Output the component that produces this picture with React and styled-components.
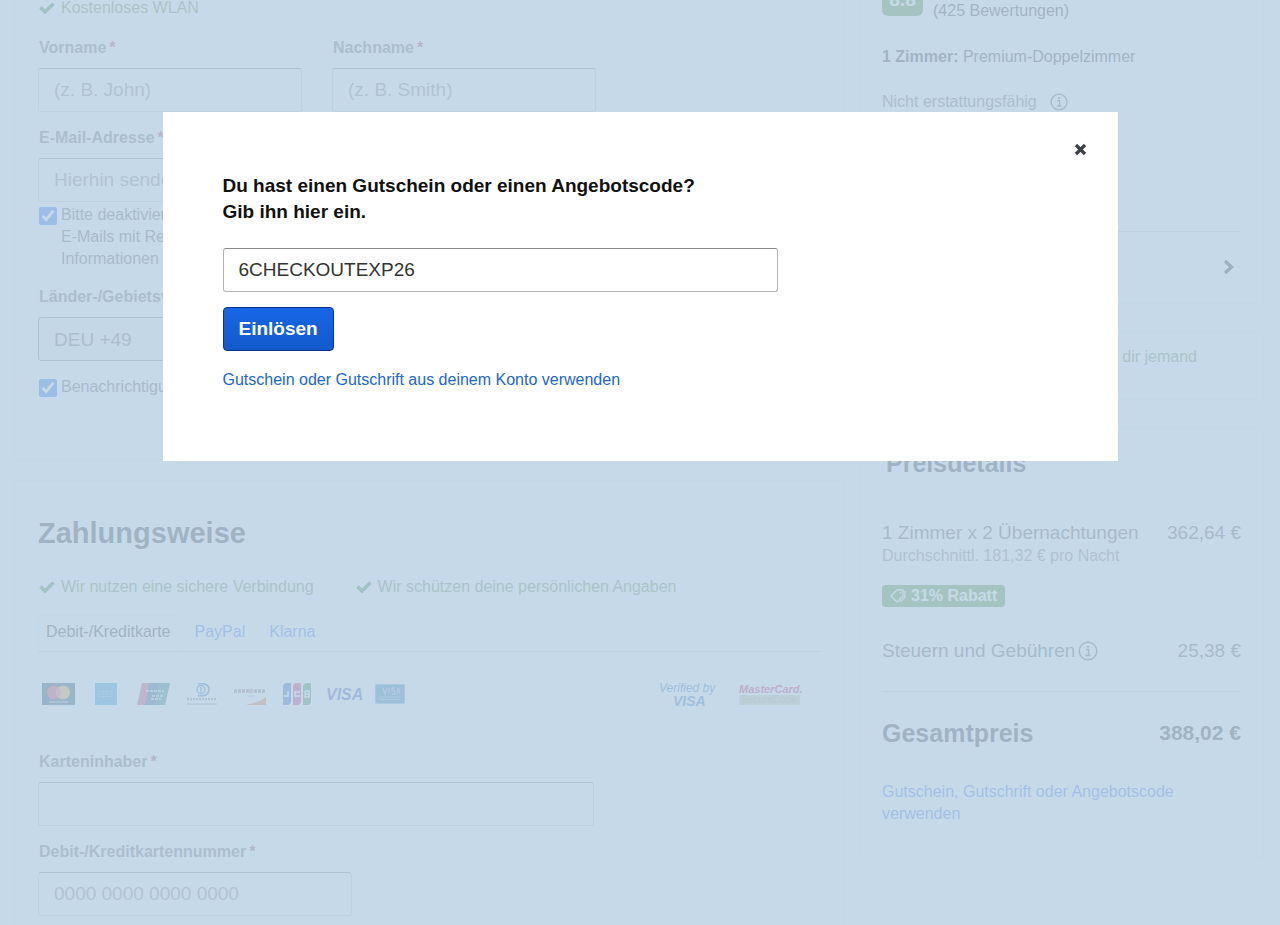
import React from "react";
import styled, { createGlobalStyle } from "styled-components";

const GlobalStyle = createGlobalStyle`
  * { box-sizing: border-box; }
  body {
    margin: 0;
    overflow: hidden;
    background: #fff;
    color: #444;
    font-family: "Liberation Sans", Arial, sans-serif;
    font-size: 16px;
    line-height: 22px;
  }
  h1, h2, p { margin: 0; }
  a { color: #4f7cf5; text-decoration: none; }
`;

const Page = styled.div`
  display: grid;
  grid-template-columns: minmax(0, 1fr) 404px;
  gap: 16px;
  align-items: start;
  margin-top: -60px;
  padding: 0 16px 0 14px;
`;

const Column = styled.div`
  display: flex;
  flex-direction: column;
  gap: ${(p) => p.$gap}px;
`;

const Card = styled.section`
  border: 1px solid #f3f3f3;
  padding: ${(p) => p.$pad};
`;

const TickList = styled.ul`
  display: flex;
  gap: 37px;
  list-style: none;
  margin: 0 0 ${(p) => p.$below}px;
  padding: 0;
  color: #6f9358;
`;

const TickItem = styled.li`
  display: flex;
  align-items: center;
  gap: 6px;
  padding-left: 1px;
  padding-right: 4px;
`;

const FieldRow = styled.div`
  display: flex;
  gap: 30px;
`;

const Field = styled.div`
  display: flex;
  flex-direction: column;
  gap: 9px;
  width: ${(p) => p.$width}px;
  margin-bottom: ${(p) => (p.$tight ? 2 : 15)}px;
`;

const Label = styled.label`
  padding-left: 1px;
  font-weight: bold;
  color: #777;
`;

const Star = styled.span`
  margin-left: 3px;
  color: #a0527a;
`;

const Input = styled.input`
  width: 100%;
  height: 44px;
  padding: 0 15px;
  border: 1px solid ${(p) => (p.$strong ? "#b4b4b4" : "#d6d6d6")};
  border-top-color: #8a8a8a;
  border-radius: 3px;
  background: transparent;
  color: #333;
  font: 19px "Liberation Sans", Arial, sans-serif;
  &::placeholder { color: #919191; opacity: 1; }
`;

const Select = styled.select`
  appearance: none;
  width: 100%;
  height: 44px;
  padding: 0 15px;
  border: 1px solid #8a8a8a;
  border-radius: 3px;
  background: #f2f2f2;
  color: #777;
  font: 19px "Liberation Sans", Arial, sans-serif;
`;

const CheckRow = styled.label`
  display: flex;
  align-items: flex-start;
  gap: 4px;
  max-width: 580px;
  margin-bottom: 16px;
  color: #666;
`;

const Checkbox = styled.input`
  flex: none;
  width: 18px;
  height: 18px;
  margin: 3px 0 0 1px;
  accent-color: #2e72f5;
`;

const Title = styled.h1`
  margin-bottom: 25px;
  font-size: 29px;
  line-height: 36px;
`;

const Tabs = styled.nav`
  display: flex;
  gap: 8px;
  height: 37px;
  margin-bottom: 30px;
  border-bottom: 1px solid #d4d4d4;
`;

const Tab = styled.a`
  padding: 5px 7px 0;
  border: 1px solid ${(p) => (p.$active ? "#f5f5f5" : "transparent")};
  border-bottom: 0;
  color: ${(p) => (p.$active ? "#444" : "#4f7cf5")};
`;

const Logos = styled.div`
  display: flex;
  align-items: center;
  height: 24px;
  margin-bottom: 45px;
  padding: 0 12px 0 4px;
`;

const Logo = styled.svg`
  flex: none;
  margin-left: ${(p) => p.$before || 0}px;
  font-family: "Liberation Sans", Arial, sans-serif;
`;

const Push = styled.span`
  flex: 1;
`;

const Rating = styled.div`
  display: flex;
  align-items: center;
  gap: 10px;
  margin-bottom: 24px;
`;

const Score = styled.strong`
  width: 41px;
  height: 32px;
  border-radius: 6px;
  background: #5a963c;
  color: #fff;
  font-size: 19px;
  line-height: 32px;
  text-align: center;
`;

const Condition = styled.p`
  display: flex;
  align-items: center;
  gap: 13px;
  margin: 23px 0 118px;
  color: #777;
`;

const MoreButton = styled.button`
  display: flex;
  align-items: center;
  justify-content: flex-end;
  width: 100%;
  height: 72px;
  padding: 0 6px 2px 0;
  border: 0;
  border-top: 1px solid #d4d4d4;
  background: none;
  color: #333;
`;

const Urgency = styled.p`
  padding-right: 44px;
  color: #6f9358;
  text-align: right;
`;

const PriceHeader = styled.div`
  padding: 18px 25px;
  border-bottom: 1px solid #f3f3f3;
`;

const PriceTitle = styled.h2`
  font-size: 25px;
  line-height: 32px;
`;

const PriceBody = styled.div`
  padding: 23px 22px 32px 21px;
`;

const PriceRow = styled.div`
  display: flex;
  align-items: center;
  justify-content: space-between;
  color: #666;
  font-size: 19px;
  line-height: 24px;
`;

const WithIcon = styled.span`
  display: flex;
  align-items: center;
  gap: 3px;
`;

const Average = styled.p`
  color: #888;
`;

const Discount = styled.strong`
  display: flex;
  align-items: center;
  gap: 5px;
  width: max-content;
  height: 22px;
  margin: 18px 0 32px;
  padding: 0 8px;
  border-radius: 4px;
  background: #5a963c;
  color: #fff;
`;

const TotalRow = styled(PriceRow)`
  margin: 28px 0 32px;
  padding-top: 25px;
  border-top: 1px solid #d4d4d4;
  color: #444;
  font-size: 21px;
  font-weight: bold;
`;

const Backdrop = styled.div`
  position: fixed;
  inset: 0;
  display: flex;
  align-items: flex-start;
  justify-content: center;
  padding-top: 112px;
  background: rgba(184, 208, 226, 0.8);
`;

const Dialog = styled.div`
  position: relative;
  width: 75%;
  max-width: 955px;
  min-width: 640px;
  padding: 61px 60px 70px;
  background: #fff;
`;

const CloseButton = styled.button`
  position: absolute;
  top: 28px;
  right: 28px;
  display: flex;
  padding: 3px;
  border: 0;
  background: none;
  color: #3c3f45;
`;

const DialogTitle = styled.label`
  display: block;
  margin-bottom: 23px;
  color: #111;
  font-size: 19px;
  font-weight: bold;
  line-height: 26px;
`;

const CodeBox = styled.div`
  width: 555px;
  max-width: 100%;
`;

const RedeemButton = styled.button`
  display: block;
  height: 44px;
  margin: 15px 0 18px;
  padding: 0 15px;
  border: 1px solid #0b2f8a;
  border-radius: 4px;
  background: linear-gradient(#1667e6, #1459cc);
  color: #fff;
  font: bold 19px "Liberation Sans", Arial, sans-serif;
`;

const DialogLink = styled.a`
  color: #2266cc;
`;

const Tick = () => (
  <svg width="16" height="12" viewBox="0 0 16 12" aria-hidden="true">
    <path d="M1.500 5.500l4.500 4.500 8.500-8.500" fill="none" stroke="#4c8a48" strokeWidth="3.6" />
  </svg>
);

const Info = ({ size }) => (
  <svg width={size} height={size} viewBox="0 0 20 20" aria-hidden="true">
    <circle cx="10" cy="10" r="8.8" fill="none" stroke="#666" strokeWidth="1.5" />
    <path d="M8 8.500h2.600V14M7.600 14.400h5" fill="none" stroke="#666" strokeWidth="1.5" />
    <circle cx="10" cy="5.6" r="1.2" fill="#666" />
  </svg>
);

const TextField = ({ id, label, width, placeholder, tight }) => (
  <Field $width={width} $tight={tight}>
    <Label htmlFor={id}>
      {label}
      <Star>*</Star>
    </Label>
    <Input id={id} placeholder={placeholder} />
  </Field>
);

const CardLogos = () => (
  <Logos>
    <Logo width="33" height="22" viewBox="0 0 33 22" role="img" aria-label="Mastercard">
      <rect width="33" height="22" fill="#244a6a" />
      <circle cx="12" cy="9.5" r="7" fill="#e0405a" />
      <circle cx="21" cy="9.5" r="7" fill="#eeb050" />
      <path d="M16.5 4.200a7 7 0 0 1 0 10.600a7 7 0 0 1 0-10.600z" fill="#ee7a50" />
      <path d="M7 19h19" stroke="#9ab" strokeWidth="1.5" />
    </Logo>
    <Logo $before={20} width="22" height="22" viewBox="0 0 22 22" role="img" aria-label="American Express">
      <rect width="22" height="22" fill="#3aa0e0" />
      <path d="M2 11h18M3 8.500h16M3 13.500h16" stroke="#80c0ec" strokeWidth="1" strokeDasharray="3 1" />
    </Logo>
    <Logo $before={20} width="33" height="22" viewBox="0 0 33 22" role="img" aria-label="UnionPay">
      <path d="M5 0h9L9 22H0z" fill="#d85070" />
      <path d="M12 0h12l-5 22H8z" fill="#355f90" />
      <path d="M22 0h11l-5 22H17z" fill="#2c8088" />
      <path d="M9 8h18M15 13h11M14 16h10" stroke="#b8ccd8" strokeWidth="1.8" strokeDasharray="3 1" />
    </Logo>
    <Logo $before={16} width="32" height="22" viewBox="0 0 32 22" role="img" aria-label="Diners Club">
      <path d="M12 .6h5a6 6 0 0 1 0 12h-5" fill="none" stroke="#4a7fbf" strokeWidth="1.6" />
      <circle cx="15" cy="6.5" r="4" fill="none" stroke="#4a7fbf" strokeWidth="1.4" />
      <path d="M15 4v5" stroke="#4a7fbf" strokeWidth="1.4" />
      <path d="M1 16h29" stroke="#8898aa" strokeWidth="2.5" strokeDasharray="2 1" />
      <path d="M1 21h30" stroke="#aab6c2" strokeWidth="1.5" />
    </Logo>
    <Logo $before={15} width="34" height="22" viewBox="0 0 34 22" role="img" aria-label="Discover">
      <path d="M12 22c8-1 16-4 21-8v8z" fill="#ee8058" />
      <path d="M1 8h31" stroke="#888" strokeWidth="3.6" strokeDasharray="3 1" />
      <circle cx="18" cy="8" r="2.5" fill="#dca080" />
      <path d="M14 13h8" stroke="#aaa" />
    </Logo>
    <Logo $before={16} width="28" height="22" viewBox="0 0 28 22" role="img" aria-label="JCB">
      <path d="M4 0h4v18a4 4 0 0 1-4 4H0V4a4 4 0 0 1 4-4z" fill="#3b6ac0" />
      <path d="M14 0h4v18a4 4 0 0 1-4 4h-4V4a4 4 0 0 1 4-4z" fill="#cc4068" />
      <path d="M24 0h4v18a4 4 0 0 1-4 4h-4V4a4 4 0 0 1 4-4z" fill="#449058" />
      <path d="M1 13h4V8M17 9h-5v4h5M22 8v6h4v-3h-4M26 11V8h-4" fill="none" stroke="#fff" strokeWidth="1.5" />
    </Logo>
    <Logo $before={14} width="38" height="22" viewBox="0 0 38 22" role="img" aria-label="Visa">
      <text x="1" y="17" fontSize="16" fontWeight="bold" fontStyle="italic" fill="#4a5cc0">VISA</text>
    </Logo>
    <Logo $before={12} width="30" height="20" viewBox="0 0 30 20" role="img" aria-label="Visa Electron">
      <rect x=".5" y=".5" width="29" height="19" rx="1" fill="#397fb8" stroke="#78acd0" />
      <path d="M4 13h22M5 15.500h20" stroke="#84b4d8" strokeWidth="1" />
      <path d="M8 4l2 6 2-6M14 4v6M20 4h-3v3h3v3h-3M22 10l1.500-6 1.500 6" fill="none" stroke="#94bcdc" strokeWidth="1.3" />
    </Logo>
    <Push />
    <Logo width="58" height="26" viewBox="0 0 58 26" role="img" aria-label="Verified by Visa">
      <text x="1" y="11" fontSize="12" fontStyle="italic" fill="#3f78c0">Verified by</text>
      <text x="15" y="25" fontSize="14" fontWeight="bold" fontStyle="italic" fill="#3f78c0">VISA</text>
    </Logo>
    <Logo $before={22} width="70" height="26" viewBox="0 0 70 26" role="img" aria-label="MasterCard SecureCode">
      <text x="1" y="12" fontSize="11" fontWeight="bold" fontStyle="italic" fill="#d02868">MasterCard.</text>
      <rect x="1" y="14" width="61" height="10" fill="#ccd0b0" />
      <text x="3" y="22" fontSize="10" fill="#b0b494">SecureCode</text>
    </Logo>
  </Logos>
);

export default function App() {
  return (
    <>
      <GlobalStyle />
      <Page>
        <Column $gap={20}>
          <Card $pad="56px 23px 45px">
            <TickList $below={18}>
              <TickItem><Tick />Kostenloses WLAN</TickItem>
            </TickList>
            <FieldRow>
              <TextField id="first" label="Vorname" width={264} placeholder="(z. B. John)" />
              <TextField id="last" label="Nachname" width={264} placeholder="(z. B. Smith)" />
            </FieldRow>
            <TextField id="mail" label="E-Mail-Adresse" width={558} placeholder="Hierhin senden wir deine Bestätigung" tight />
            <CheckRow>
              <Checkbox type="checkbox" defaultChecked />
              <span>
                Bitte deaktiviere das Kästchen, wenn du keine
                <br />
                E-Mails mit Reiseangeboten, Rabatten und
                <br />
                Informationen erhalten möchtest.
              </span>
            </CheckRow>
            <Field $width={264}>
              <Label htmlFor="country">Länder-/Gebietsvorwahl</Label>
              <Select id="country" defaultValue="de">
                <option value="de">DEU +49</option>
              </Select>
            </Field>
            <CheckRow>
              <Checkbox type="checkbox" defaultChecked />
              <span>Benachrichtigungen per SMS erhalten</span>
            </CheckRow>
          </Card>

          <Card $pad="34px 23px 40px">
            <Title>Zahlungsweise</Title>
            <TickList $below={17}>
              <TickItem><Tick />Wir nutzen eine sichere Verbindung</TickItem>
              <TickItem><Tick />Wir schützen deine persönlichen Angaben</TickItem>
            </TickList>
            <Tabs>
              <Tab href="#card" $active>Debit-/Kreditkarte</Tab>
              <Tab href="#paypal">PayPal</Tab>
              <Tab href="#klarna">Klarna</Tab>
            </Tabs>
            <CardLogos />
            <TextField id="holder" label="Karteninhaber" width={556} />
            <TextField id="number" label="Debit-/Kreditkartennummer" width={314} placeholder="0000 0000 0000 0000" />
          </Card>
        </Column>

        <Column $gap={28}>
          <Card $pad="37px 22px 0 21px">
            <Rating>
              <Score>8.8</Score>
              <span>
                Fabelhaft
                <br />
                (425 Bewertungen)
              </span>
            </Rating>
            <p><b>1 Zimmer:</b> Premium-Doppelzimmer</p>
            <Condition>
              Nicht erstattungsfähig
              <Info size={18} />
            </Condition>
            <MoreButton aria-label="Details anzeigen">
              <svg width="12" height="16" viewBox="0 0 12 16" aria-hidden="true">
                <path d="M2 2l6.500 6L2 14" fill="none" stroke="currentColor" strokeWidth="3.2" />
              </svg>
            </MoreButton>
          </Card>
          <Card $pad="13px 22px 31px 21px">
            <Urgency>dir jemand</Urgency>
          </Card>
          <Card $pad="0">
            <PriceHeader><PriceTitle>Preisdetails</PriceTitle></PriceHeader>
            <PriceBody>
              <PriceRow>
                <span>1 Zimmer x 2 Übernachtungen</span>
                <span>362,64 €</span>
              </PriceRow>
              <Average>Durchschnittl. 181,32 € pro Nacht</Average>
              <Discount>
                <svg width="16" height="16" viewBox="0 0 16 16" aria-hidden="true">
                  <path d="M1 8l6-6h6v6l-6 6z" fill="none" stroke="#fff" strokeWidth="1.3" strokeLinejoin="round" />
                  <path d="M10 14l5-5V3" fill="none" stroke="#fff" strokeWidth="1.3" />
                  <circle cx="10.5" cy="4.8" r="1" fill="#fff" />
                </svg>
                31% Rabatt
              </Discount>
              <PriceRow>
                <WithIcon>Steuern und Gebühren <Info size={20} /></WithIcon>
                <span>25,38 €</span>
              </PriceRow>
              <TotalRow>
                <PriceTitle as="span">Gesamtpreis</PriceTitle>
                <span>388,02 €</span>
              </TotalRow>
              <a href="#voucher">Gutschein, Gutschrift oder Angebotscode verwenden</a>
            </PriceBody>
          </Card>
        </Column>
      </Page>

      <Backdrop>
        <Dialog role="dialog" aria-modal="true">
          <CloseButton aria-label="Schließen">
            <svg width="13" height="13" viewBox="0 0 13 13" aria-hidden="true">
              <path d="M2 2l9 9M11 2l-9 9" stroke="currentColor" strokeWidth="3.2" />
            </svg>
          </CloseButton>
          <DialogTitle htmlFor="code">
            Du hast einen Gutschein oder einen Angebotscode?
            <br />
            Gib ihn hier ein.
          </DialogTitle>
          <CodeBox>
            <Input id="code" $strong defaultValue="6CHECKOUTEXP26" />
          </CodeBox>
          <RedeemButton>Einlösen</RedeemButton>
          <DialogLink href="#account">Gutschein oder Gutschrift aus deinem Konto verwenden</DialogLink>
        </Dialog>
      </Backdrop>
    </>
  );
}
